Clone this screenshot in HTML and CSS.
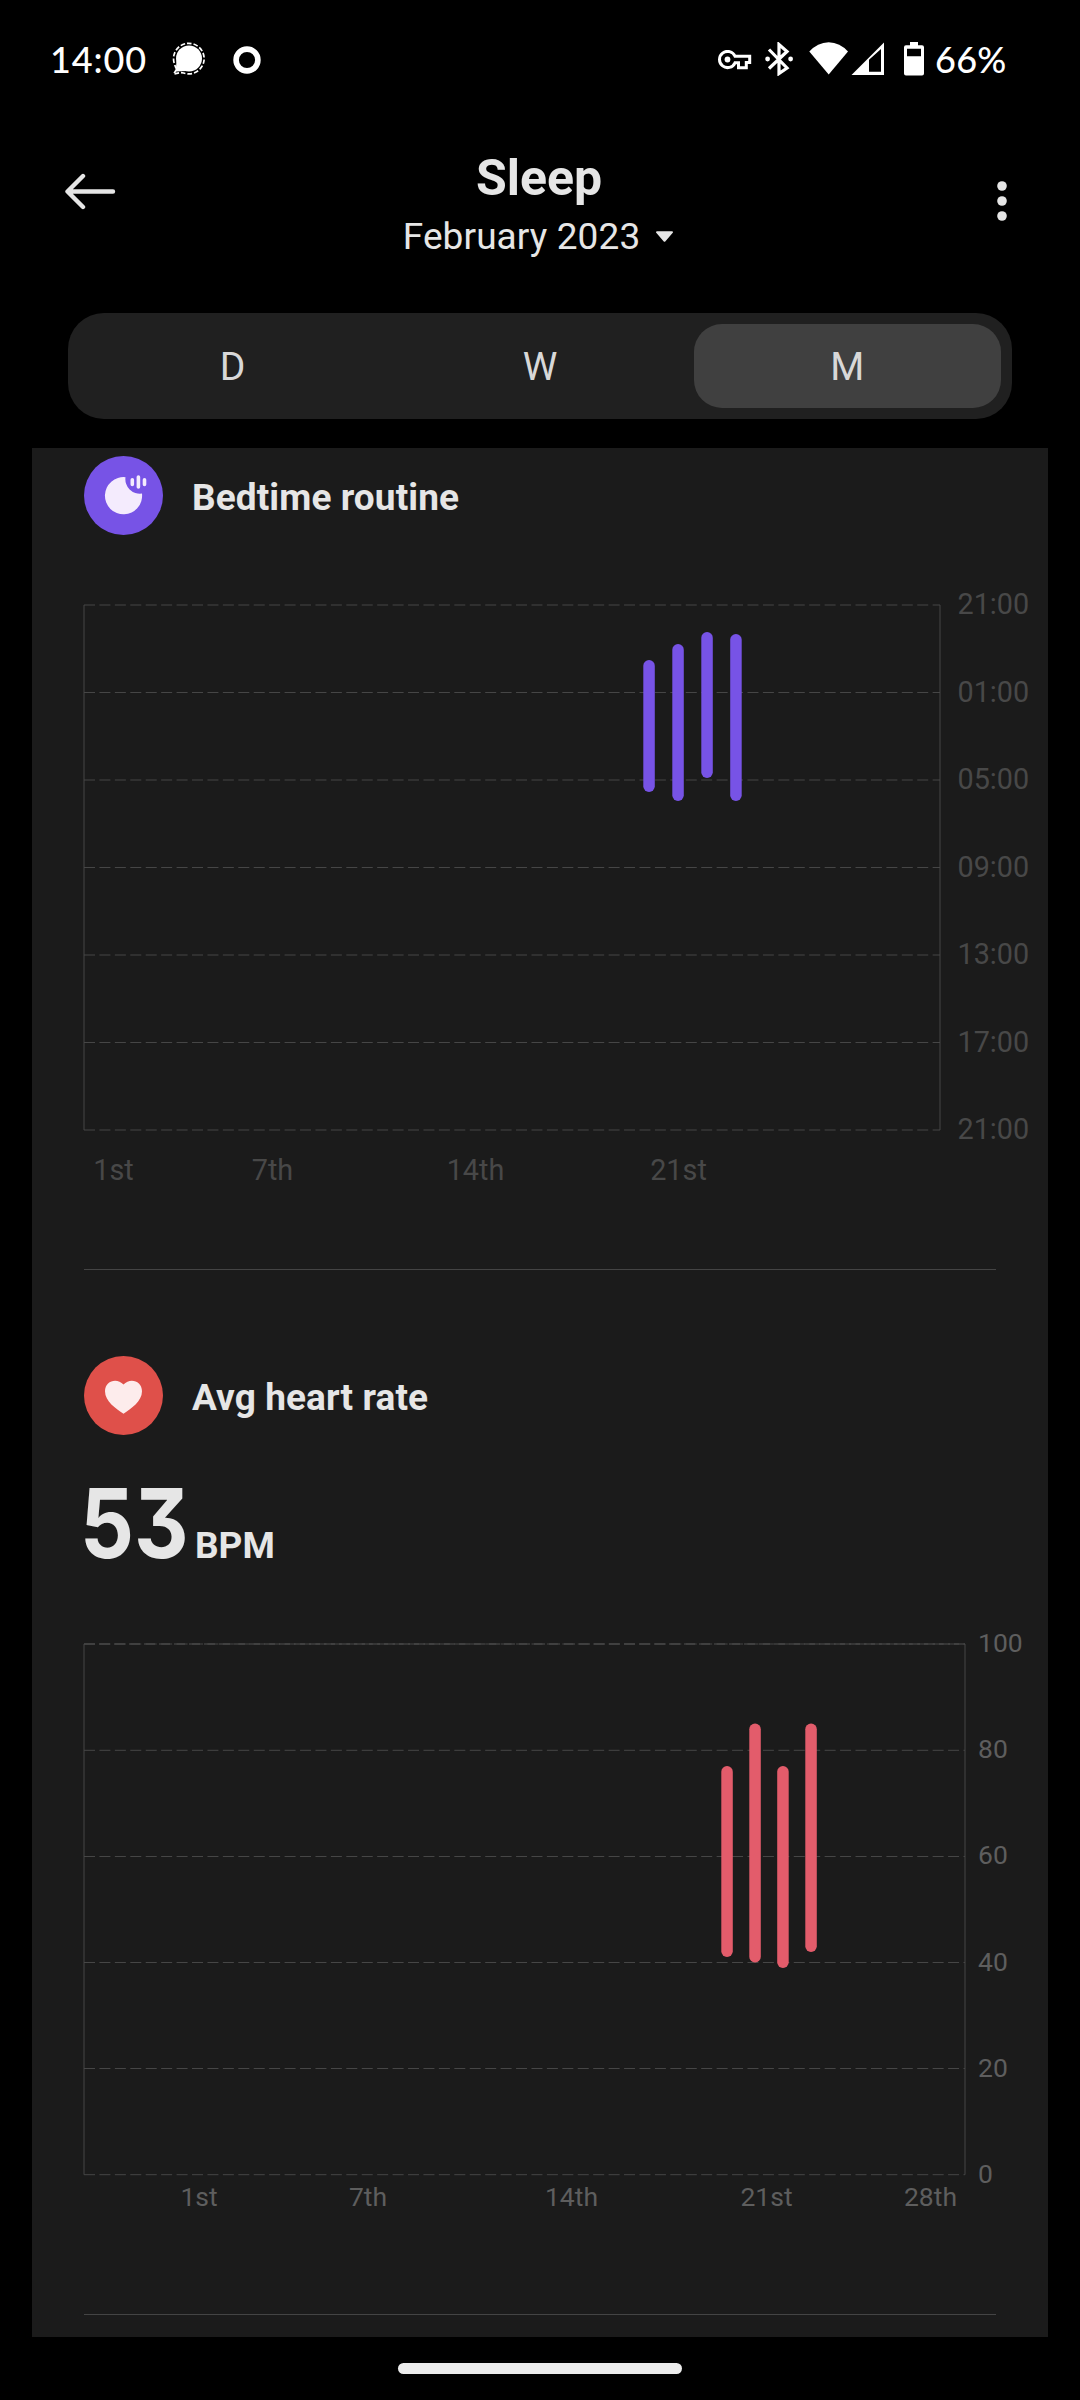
FILE: index.html
```html
<!DOCTYPE html>
<html lang="en">
<head>
  <meta charset="UTF-8" />
  <meta name="viewport" content="width=device-width, initial-scale=1.0"/>
  <title>Sleep</title>
  <link rel="stylesheet" href="styles.css">
</head>
<body>
  <div class="status-bar">
    <span class="clock">14:00</span>
    <svg class="icon-chat" width="34" height="34" viewBox="0 0 34 34">
      <circle cx="17" cy="16.5" r="13" fill="#fff"/>
      <path d="M4.5 19l-.8 10.5L15 29z" fill="#fff"/>
      <path d="M4.6 27.2L1.6 32l7-1.4 3 .4A15.3 15.3 0 1 0 2.5 22l1 3z" fill="none" stroke="#fff" stroke-width="1.7" stroke-dasharray="4.6 2"/>
    </svg>
    <svg class="icon-ring" width="28" height="28" viewBox="0 0 28 28">
      <circle cx="14" cy="14" r="10.9" fill="none" stroke="#fff" stroke-width="5.6"/>
    </svg>

    <div class="status-right">
      <svg class="icon-key" width="34" height="20" viewBox="0 0 34 20">
        <path d="M17 6.2A8.1 8.1 0 1 0 17 12.8H20.5V17.8H28.3V12.6H31.7V6.2Z" fill="none" stroke="#fff" stroke-width="3"/>
        <circle cx="9.5" cy="9.5" r="2.9" fill="#fff"/>
      </svg>
      <svg class="icon-bluetooth" width="28" height="34" viewBox="0 0 28 34">
        <path d="M4 7.5L22 26L14 31.5V2.5L22 9.5L4 26.5" fill="none" stroke="#fff" stroke-width="3.2"/>
        <circle cx="2.6" cy="17" r="2.4" fill="#fff"/>
        <circle cx="25.6" cy="17" r="2.4" fill="#fff"/>
      </svg>
      <svg class="icon-wifi" width="40" height="34" viewBox="0 0 40 34">
        <path d="M0.3 9.6Q8.5 0.4 19.7 0.2Q31 0.4 39 9.6L19.7 32.5Z" fill="#fff"/>
      </svg>
      <svg class="icon-signal" width="34" height="34" viewBox="0 0 34 34">
        <path d="M0.5 33L33 0.5V33ZM18 17.8V29.7H30V7Z" fill="#fff" fill-rule="evenodd"/>
      </svg>
      <svg class="icon-battery" width="20" height="34" viewBox="0 0 20 34">
        <path d="M6 0H14V3.3H18Q20 3.3 20 5.3V31.6Q20 33.6 18 33.6H2Q0 33.6 0 31.6V5.3Q0 3.3 2 3.3H6ZM3 6.7V14.3H17V6.7Z" fill="#fff" fill-rule="evenodd"/>
      </svg>
      <span class="battery-level">66%</span>
    </div>
  </div>

  <header>
    <svg class="back" width="54" height="38" viewBox="0 0 54 38">
      <path d="M49 19.5H4M19 4L3.5 19.5L19 35" fill="none" stroke="#e6e6e6" stroke-width="4.4" stroke-linecap="round" stroke-linejoin="round"/>
    </svg>
    <div class="title">
      <h1>Sleep</h1>
      <p>February 2023
        <svg width="20" height="12" viewBox="0 0 20 12">
          <path d="M2 1.2H17L9.5 9.8Z" fill="#e6e6e6" stroke="#e6e6e6" stroke-width="2" stroke-linejoin="round"/>
        </svg>
      </p>
    </div>
    <svg class="more" width="12" height="42" viewBox="0 0 12 42">
      <g fill="#e6e6e6">
        <circle cx="6" cy="6" r="4.8"/>
        <circle cx="6" cy="21" r="4.8"/>
        <circle cx="6" cy="36" r="4.8"/>
      </g>
    </svg>
  </header>

  <nav class="tabs">
    <div class="tab">D</div>
    <div class="tab">W</div>
    <div class="tab active">M</div>
  </nav>

  <main>
    <section class="bedtime">
      <div class="section-title">
        <svg width="79" height="79" viewBox="0 0 79 79">
          <circle cx="39.5" cy="39.5" r="39.5" fill="#7753e6"/>
          <path d="M41.5 21.2A18.6 18.6 0 1 0 58 37.6A14.5 14.5 0 0 1 41.5 21.2Z" fill="#f4ebfd"/>
          <path d="M48.3 23.8V28.4M54.4 21V31M60.5 23.8V28.4" stroke="#f4ebfd" stroke-width="3.6" stroke-linecap="round"/>
        </svg>
        <h2>Bedtime routine</h2>
      </div>

      <svg class="chart" width="964" height="600" viewBox="84 590 964 600">
        <g class="grid">
          <path d="M84 605H940M84 692.5H940M84 780H940M84 867.5H940M84 955H940M84 1042.5H940M84 1130H940"/>
        </g>
        <path class="frame" d="M84 605V1130M940 605V1130"/>
        <g class="sleep-bars">
          <rect x="643.3" y="660" width="11.5" height="132" rx="5.7"/>
          <rect x="672.3" y="644" width="11.5" height="157" rx="5.7"/>
          <rect x="701.3" y="632" width="11.5" height="146" rx="5.7"/>
          <rect x="730.2" y="634" width="11.5" height="167" rx="5.7"/>
        </g>
        <g class="hours">
          <text x="957.5" y="614">21:00</text>
          <text x="957.5" y="702">01:00</text>
          <text x="957.5" y="789">05:00</text>
          <text x="957.5" y="877">09:00</text>
          <text x="957.5" y="964">13:00</text>
          <text x="957.5" y="1052">17:00</text>
          <text x="957.5" y="1139">21:00</text>
        </g>
        <g class="days">
          <text x="113.5" y="1180">1st</text>
          <text x="272.5" y="1180">7th</text>
          <text x="475.5" y="1180">14th</text>
          <text x="678.5" y="1180">21st</text>
        </g>
      </svg>
    </section>

    <section class="heart">
      <div class="section-title">
        <svg width="79" height="79" viewBox="0 0 79 79">
          <circle cx="39.5" cy="39.5" r="39.5" fill="#df504a"/>
          <path d="M39.5 57.8C32 52.6 21 45.5 21 35.3C21 24.8 33 21.3 39.5 28.6C46 21.3 58 24.8 58 35.3C58 45.5 47 52.6 39.5 57.8Z" fill="#fdecec"/>
        </svg>
        <h2>Avg heart rate</h2>
      </div>

      <div class="value"><span class="number">53</span><span class="unit">BPM</span></div>

      <svg class="chart" width="964" height="590" viewBox="84 1625 964 590">
        <g class="grid">
          <path d="M84 1644H965M84 1750.3H965M84 1856.5H965M84 1962.5H965M84 2068.5H965M84 2174.7H965"/>
          <path class="limit" d="M84 1644H965"/>
        </g>
        <path class="frame" d="M84 1644V2174.7M965 1644V2174.7"/>
        <g class="heart-bars">
          <rect x="721.3" y="1766" width="11.5" height="191" rx="5.7"/>
          <rect x="749.3" y="1723.5" width="11.5" height="239" rx="5.7"/>
          <rect x="777.2" y="1766" width="11.5" height="202" rx="5.7"/>
          <rect x="805.3" y="1723.5" width="11.5" height="228.5" rx="5.7"/>
        </g>
        <g class="bpm">
          <text x="978" y="1652">100</text>
          <text x="978" y="1758">80</text>
          <text x="978" y="1864">60</text>
          <text x="978" y="1971">40</text>
          <text x="978" y="2077">20</text>
          <text x="978" y="2183">0</text>
        </g>
        <g class="bpm days-center">
          <text x="199" y="2206">1st</text>
          <text x="368" y="2206">7th</text>
          <text x="571.5" y="2206">14th</text>
          <text x="766.5" y="2206">21st</text>
          <text x="930.5" y="2206">28th</text>
        </g>
      </svg>
    </section>
  </main>

  <div class="home-bar"></div>
</body>
</html>
```
FILE: styles.css
```css
* {
  box-sizing: border-box;
}

body {
  font-family: Roboto, sans-serif;
  margin: 0;
  width: 1080px;
  height: 2400px;
  overflow: hidden;
  background: #000;
  color: #e6e6e6;
}

svg {
  display: block;
  flex-shrink: 0;
}

.status-bar {
  display: flex;
  align-items: flex-start;
  height: 120px;
  padding: 42px 75px 0 50px;
  color: #fff;
  font-family: Lato, sans-serif;
  font-size: 36px;
  font-weight: 500;
  line-height: 35px;
}

.clock {
  width: 122px;
  letter-spacing: 0.9px;
}

.icon-ring {
  margin: 4px 0 0 27px;
}

.status-right {
  display: flex;
  margin-left: auto;
}

.icon-key {
  margin-top: 8px;
}

.icon-bluetooth {
  margin-left: 13px;
}

.icon-wifi {
  margin-left: 16px;
}

.icon-signal {
  margin-left: 2px;
}

.icon-battery {
  margin-left: 19px;
}

.battery-level {
  width: 70px;
  margin-left: 11px;
  letter-spacing: 0.3px;
}

header {
  display: flex;
  justify-content: space-between;
  align-items: flex-start;
  height: 193px;
  padding: 30px 72px 0 64px;
}

.back {
  margin-top: 22px;
}

.title {
  text-align: center;
  margin-left: -36px;
}

.title h1 {
  margin: 0;
  font-size: 50px;
  line-height: 56px;
}

.title p {
  display: flex;
  align-items: center;
  justify-content: center;
  gap: 15px;
  margin: 9px 0 0;
  font-size: 37px;
  letter-spacing: 0.1px;
  line-height: 44px;
}

.more {
  margin-top: 30px;
}

.tabs {
  display: flex;
  width: 944px;
  height: 106px;
  margin: 0 auto;
  padding: 11px;
  border-radius: 36px;
  background: #202020;
}

.tab {
  flex: 1;
  border-radius: 28px;
  color: #d8d8d8;
  font-size: 39px;
  line-height: 87px;
  text-align: center;
}

.tab.active {
  background: #404040;
}

main {
  width: 1016px;
  height: 1889px;
  margin: 29px auto 0;
  padding: 8px 0 0 52px;
  background: #1b1b1b;
}

section {
  position: relative;
}

section::after {
  content: "";
  display: block;
  width: 912px;
  height: 1px;
  background: #444;
}

.section-title {
  display: flex;
  align-items: center;
  gap: 29px;
}

.section-title h2 {
  margin: 4px 0 0;
  font-size: 37px;
  letter-spacing: 0.1px;
  line-height: 44px;
}

.chart {
  overflow: visible;
}

.bedtime {
  margin-bottom: 86px;
}

.bedtime .chart {
  margin: 55px 0 79px;
}

.value {
  display: flex;
  align-items: baseline;
  height: 110px;
  margin-top: 33px;
}

.number {
  width: 115px;
  margin-left: -4px;
  font-family: Inter, sans-serif;
  font-size: 96px;
  font-weight: 700;
  line-height: 111px;
  font-feature-settings: "cv09";
  transform: scaleX(0.88);
  transform-origin: left;
}

.unit {
  font-size: 37px;
  font-weight: 700;
}

.heart .chart {
  margin: 47px 0 99px;
}

.grid path {
  stroke: #464646;
  stroke-width: 1;
  stroke-dasharray: 11 4.43;
}

.grid .limit {
  stroke: #505050;
  stroke-dasharray: 11 4;
}

.frame {
  stroke: #464646;
  stroke-width: 1;
}

.sleep-bars {
  fill: #7753e6;
}

.heart-bars {
  fill: #e35c6b;
}

.hours,
.days {
  fill: #484848;
  font-size: 28.8px;
}

.days,
.days-center {
  text-anchor: middle;
}

.bpm {
  fill: #5e5e5e;
  font-size: 26.5px;
}

.home-bar {
  width: 284px;
  height: 11px;
  margin: 26px auto 0;
  border-radius: 6px;
  background: #ececec;
}
```
